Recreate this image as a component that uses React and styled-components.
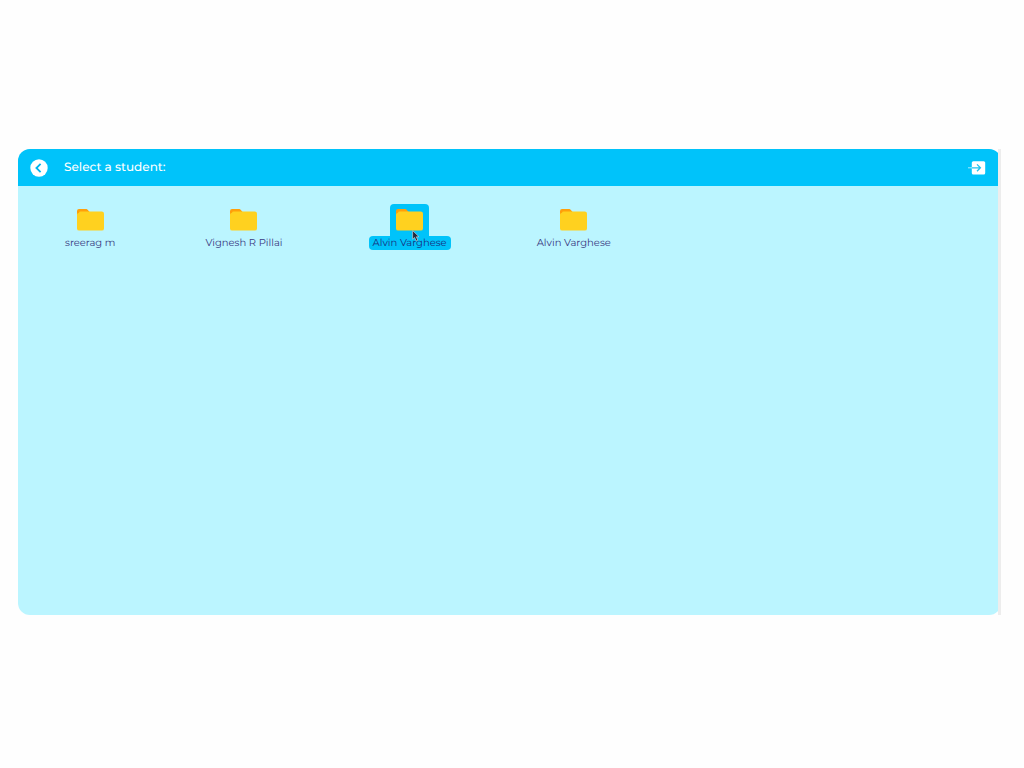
import React from "react";
import styled, { createGlobalStyle } from "styled-components";

const GlobalStyle = createGlobalStyle`
  * { box-sizing: border-box; }
  body {
    margin: 0;
    background: #fefefe;
    font-family: Montserrat, Inter, "Liberation Sans", sans-serif;
    text-rendering: geometricPrecision;
  }
`;

const Page = styled.div`
  display: flex;
  min-height: 100vh;
  padding: 149px 23px 153px 18px;
`;

const Viewport = styled.main`
  flex: 1;
  display: flex;
  overflow: hidden;
  border-right: 3px solid #ededed;
`;

const Panel = styled.section`
  flex: 1;
  display: flex;
  flex-direction: column;
  margin-right: -3px;
  overflow: hidden;
  border-radius: 12px;
  background: #bbf5ff;
`;

const Header = styled.header`
  display: flex;
  align-items: center;
  height: 37px;
  padding: 0 15px 0 12px;
  background: #00c3fa;
`;

const IconButton = styled.button`
  display: flex;
  padding: 0;
  border: 0;
  background: none;
  cursor: pointer;
`;

const Title = styled.h1`
  flex: 1;
  margin: 0 0 0 16px;
  color: #fff;
  font-size: 12px;
  line-height: 17px;
  font-weight: 500;
`;

const StudentList = styled.ul`
  display: flex;
  flex-wrap: wrap;
  gap: 16px 82px;
  margin: 0;
  padding: 18px 43px;
  list-style: none;
`;

const Student = styled.button`
  display: flex;
  flex-direction: column;
  align-items: center;
  padding: 0;
  border: 0;
  background: none;
  font-family: inherit;
  text-rendering: inherit;
  cursor: pointer;
`;

const FolderTile = styled.span`
  position: relative;
  display: flex;
  padding: 5px 6px 4px;
  border-radius: 4px 4px 0 0;
  background: ${(p) => (p.$selected ? "#00c3fa" : "transparent")};
`;

const StudentName = styled.span`
  padding: 0 4px;
  border-radius: 4px;
  background: ${(p) => (p.$selected ? "#00c3fa" : "transparent")};
  color: ${(p) => (p.$selected ? "#18307f" : "#39387f")};
  font-size: 10px;
  line-height: 14px;
  white-space: nowrap;
`;

const Pointer = styled.svg`
  position: absolute;
  left: 22px;
  top: 26px;
  z-index: 1;
`;

const BackIcon = () => (
  <svg width="18" height="18" viewBox="0 0 18 18" aria-hidden="true">
    <circle cx="9" cy="9" r="8.7" fill="#fff" />
    <path d="M10.6 4.8 6.4 9l4.2 4.2" fill="none" stroke="#00b5ee" strokeWidth="1.8" />
  </svg>
);

const ExitIcon = () => (
  <svg width="18" height="16" viewBox="0 0 18 16" aria-hidden="true">
    <rect x="3.8" y="1.2" width="13.4" height="13.2" rx="1.5" fill="#fff" />
    <path d="M0 7.8h4" stroke="#a5ebff" strokeWidth="1" />
    <path d="M4 7.8h8.5M9 4.4l3.4 3.4L9 11.2" fill="none" stroke="#1fc4ef" strokeWidth="1.3" />
  </svg>
);

const FolderIcon = () => (
  <svg width="27" height="23" viewBox="0 0 27 23" aria-hidden="true">
    <path d="M0 12V2Q0 0 2 0h7.2q1 0 1.6.9L12.3 2.6v5Z" fill="#ff9f0a" />
    <path d="M2 3.8Q2.2 2.6 3.6 2.6h21.2Q27 2.6 27 4.8v14.6q0 2.2-2.2 2.2H2.2Q0 21.6 0 19.4V5.6q0-1.4 2-1.8Z" fill="#ffd11f" />
  </svg>
);

const students = [
  { id: 1, name: "sreerag m" },
  { id: 2, name: "Vignesh R Pillai" },
  { id: 3, name: "Alvin Varghese" },
  { id: 4, name: "Alvin Varghese" },
];

export default function App() {
  const [selected, setSelected] = React.useState(3);
  return (
    <>
      <GlobalStyle />
      <Page>
        <Viewport>
          <Panel>
            <Header>
              <IconButton type="button" aria-label="Back"><BackIcon /></IconButton>
              <Title>Select a student:</Title>
              <IconButton type="button" aria-label="Exit"><ExitIcon /></IconButton>
            </Header>
            <StudentList>
              {students.map(({ id, name }) => (
                <li key={id}>
                  <Student type="button" aria-pressed={selected === id} onClick={() => setSelected(id)}>
                    <FolderTile $selected={selected === id}>
                      <FolderIcon />
                      {selected === id && (
                        <Pointer width="9" height="12" viewBox="0 0 9 12" aria-hidden="true">
                          <path d="M.6.6v8.6l2-1.8 1.5 3.5 1.7-.7-1.5-3.4H7Z" fill="#242a3c" stroke="#d5dce2" strokeWidth=".6" />
                        </Pointer>
                      )}
                    </FolderTile>
                    <StudentName $selected={selected === id}>{name}</StudentName>
                  </Student>
                </li>
              ))}
            </StudentList>
          </Panel>
        </Viewport>
      </Page>
    </>
  );
}
